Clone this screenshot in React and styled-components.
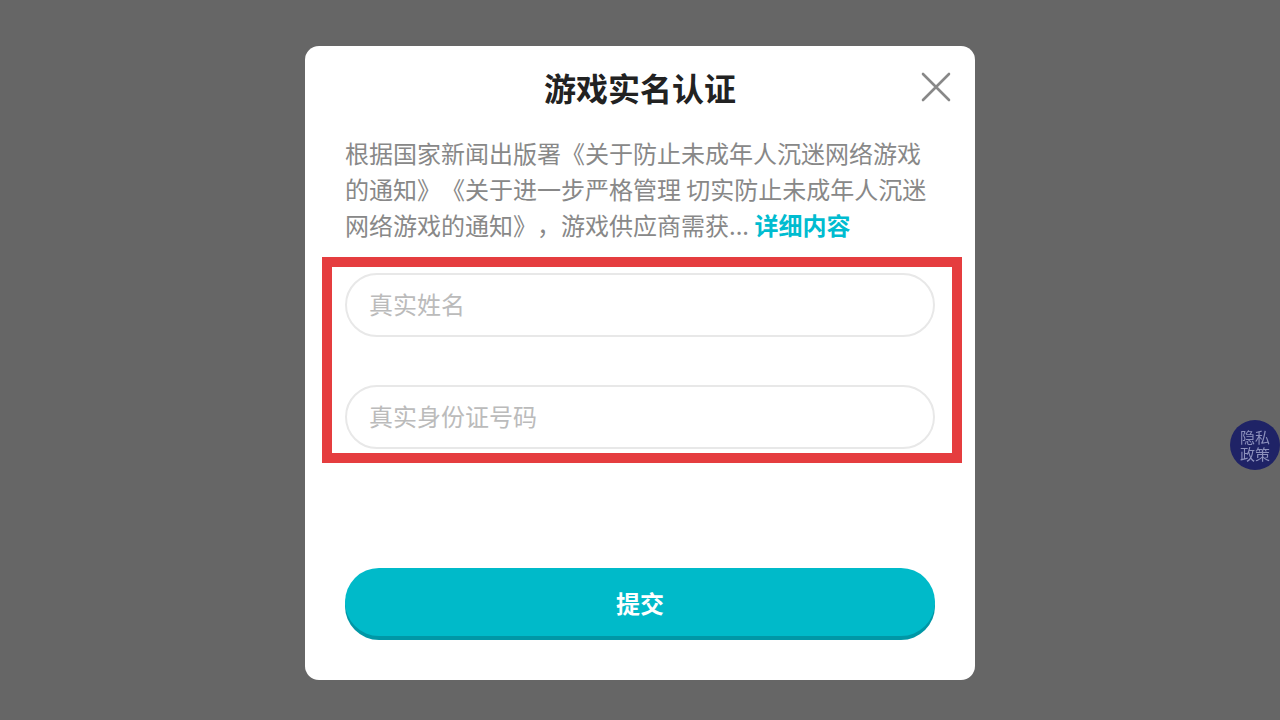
import styled, { createGlobalStyle } from "styled-components"

const GlobalStyle = createGlobalStyle`
    html, body {
        margin: 0;
        padding: 0;
        background: #666666;
        font-family: "Noto Sans CJK SC", "Noto Sans", sans-serif;
    }
    * { box-sizing: border-box; }
`

const Page = styled.div`
    width: 1280px;
    height: 720px;
    background: #666666;
    display: flex;
    justify-content: center;
    padding-top: 46px;
    overflow: hidden;
`

const Card = styled.div`
    width: 670px;
    height: 634px;
    background: #ffffff;
    border-radius: 14px;
    display: flex;
    flex-direction: column;
`

const Header = styled.div`
    display: grid;
    grid-template-columns: 1fr auto 1fr;
    align-items: center;
    padding: 18px 24px 0;
    height: 64px;
`

const Title = styled.h1`
    grid-column: 2;
    margin: 0;
    font-size: 32px;
    line-height: 44px;
    font-weight: 700;
    color: #222222;
`

const Close = styled.button`
    grid-column: 3;
    justify-self: end;
    width: 30px;
    height: 30px;
    padding: 0;
    border: none;
    background: none;
    display: flex;
    align-items: center;
    justify-content: center;
    cursor: pointer;
`

const Body = styled.div`
    padding: 0 40px;
    display: flex;
    flex-direction: column;
`

const Notice = styled.p`
    margin: 25px 0 0;
    font-size: 24px;
    line-height: 36px;
    color: #888888;
    text-spacing-trim: space-all;
`

const More = styled.a`
    color: #00bcd0;
    font-weight: 700;
    text-decoration: none;
`

const Form = styled.div`
    position: relative;
    margin-top: 30px;
    display: flex;
    flex-direction: column;
    gap: 48px;
`

const Highlight = styled.div`
    position: absolute;
    top: -16px;
    bottom: -14px;
    left: -23px;
    right: -27px;
    border: 10px solid #e53d3f;
    pointer-events: none;
`

const Input = styled.input`
    width: 100%;
    height: 64px;
    border: 2px solid #e8e8e8;
    border-radius: 32px;
    padding: 0 22px 4px;
    font-family: inherit;
    font-size: 24px;
    color: #333;
    outline: none;

    &::placeholder {
        color: #bbbbbb;
    }
`

const Submit = styled.button`
    margin-top: 119px;
    height: 68px;
    border: none;
    border-radius: 34px;
    background: #00bac9;
    box-shadow: 0 4px 0 #0097a6;
    color: #ffffff;
    font-family: inherit;
    font-size: 24px;
    font-weight: 700;
    cursor: pointer;
`

const Privacy = styled.div`
    position: fixed;
    left: 1230px;
    top: 420px;
    width: 50px;
    height: 50px;
    border-radius: 50%;
    background: #1f2366;
    color: #8c90bc;
    font-size: 15px;
    line-height: 17px;
    text-align: center;
    display: flex;
    flex-direction: column;
    align-items: center;
    justify-content: center;
`

const App = () => {
  return (
    <Page>
      <GlobalStyle />
      <Card>
        <Header>
          <Title>游戏实名认证</Title>
          <Close aria-label="关闭">
            <svg width="30" height="30" viewBox="0 0 30 30">
              <path d="M2 2 L28 28 M28 2 L2 28" stroke="#888888" strokeWidth="2.6" strokeLinecap="round" />
            </svg>
          </Close>
        </Header>
        <Body>
          <Notice>
            根据国家新闻出版署《关于防止未成年人沉迷网络游戏的通知》《关于进一步严格管理 切实防止未成年人沉迷网络游戏的通知》，游戏供应商需获... <More>详细内容</More>
          </Notice>
          <Form>
            <Input placeholder="真实姓名" />
            <Input placeholder="真实身份证号码" />
            <Highlight />
          </Form>
          <Submit>提交</Submit>
        </Body>
      </Card>
      <Privacy>
        <span>隐私</span>
        <span>政策</span>
      </Privacy>
    </Page>
  )
}

export default App
